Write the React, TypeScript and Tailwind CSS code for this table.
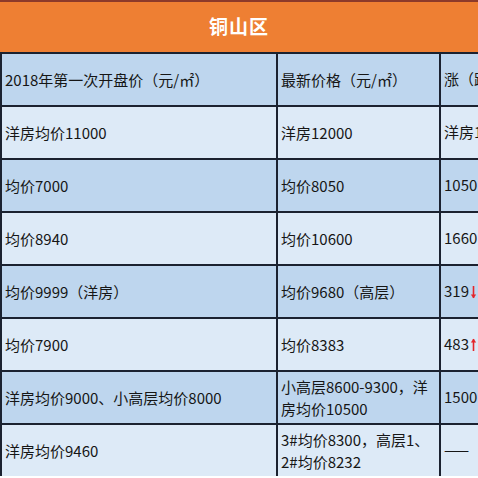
import React from "react";

const TITLE = "铜山区";

type Row = {
  first: string[];
  latest: string[];
  change: string;
  arrow?: "up" | "down";
  tone: "blue" | "light";
};

const rows: Row[] = [
  { first: ["2018年第一次开盘价（元/㎡）"], latest: ["最新价格（元/㎡）"], change: "涨（跌）幅（元/㎡）", tone: "blue" },
  { first: ["洋房均价11000"], latest: ["洋房12000"], change: "洋房1000", tone: "light" },
  { first: ["均价7000"], latest: ["均价8050"], change: "1050", tone: "blue" },
  { first: ["均价8940"], latest: ["均价10600"], change: "1660", tone: "light" },
  { first: ["均价9999（洋房）"], latest: ["均价9680（高层）"], change: "319", arrow: "down", tone: "blue" },
  { first: ["均价7900"], latest: ["均价8383"], change: "483", arrow: "up", tone: "light" },
  { first: ["洋房均价9000、小高层均价8000"], latest: ["小高层8600-9300，洋", "房均价10500"], change: "1500", tone: "blue" },
  { first: ["洋房均价9460"], latest: ["3#均价8300，高层1、", "2#均价8232"], change: "——", tone: "light" },
];

function Arrow({ dir }: { dir: "up" | "down" }) {
  return (
    <svg width="7" height="14" viewBox="0 0 7 14" className={"ml-[1px] " + (dir === "up" ? "" : "rotate-180")} aria-hidden="true">
      <path d="M3.5 1 L3.5 13" stroke="#e3262b" strokeWidth="1.6" />
      <path d="M0.8 4.5 L3.5 0.8 L6.2 4.5 Z" fill="#e3262b" />
    </svg>
  );
}

function Cell({ lines }: { lines: string[] }) {
  return (
    <div className="flex flex-col justify-center border-l-2 border-[#1b2230] pl-[3px] whitespace-nowrap overflow-hidden">
      {lines.map((l) => (
        <span key={l} className="leading-[22px]">{l}</span>
      ))}
    </div>
  );
}

export default function App() {
  return (
    <div className="w-[478px] h-[478px] overflow-hidden bg-white text-[15px] text-[#161616] font-['Noto_Sans_CJK_SC',sans-serif]">
      <div className="h-[2px] bg-[#8c3a2a]" />
      <div className="h-[50px] bg-[#ee7f33] flex items-center justify-center">
        <h1 className="text-white font-bold text-[19px] tracking-[1px] pb-[2px]">{TITLE}</h1>
      </div>
      {rows.map((row, i) => (
        <div
          key={i}
          className={
            "grid grid-cols-[276px_163px_260px] h-[53px] border-t-2 border-[#1b2230] " +
            (row.tone === "blue" ? "bg-[#bed6ee]" : "bg-[#ddeaf7]")
          }
        >
          <Cell lines={row.first} />
          <Cell lines={row.latest} />
          <div className="flex items-center border-l-2 border-[#1b2230] pl-[3px] whitespace-nowrap">
            <span className={row.change === "——" ? "tracking-[1px]" : ""}>{row.change}</span>
            {row.arrow && <Arrow dir={row.arrow} />}
          </div>
        </div>
      ))}
    </div>
  );
}
